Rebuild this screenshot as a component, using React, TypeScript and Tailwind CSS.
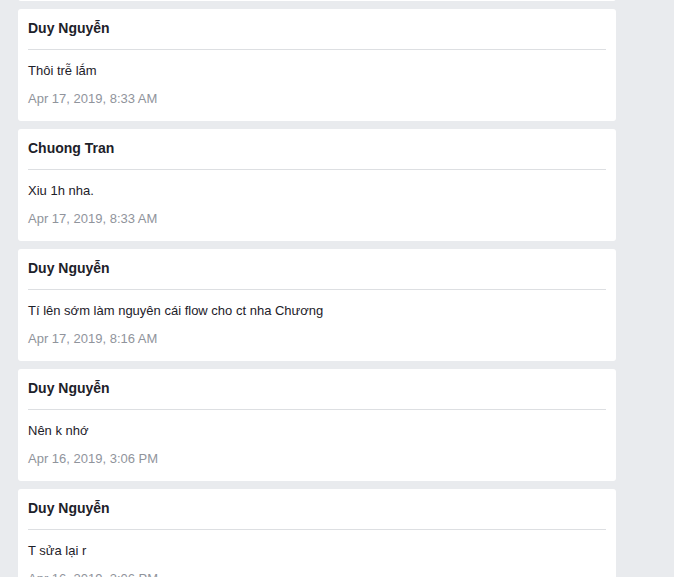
import React from "react";

type Message = {
  author: string;
  text: string;
  time: string;
};

const messages: Message[] = [
  { author: "Chuong Tran", text: "Ok", time: "Apr 17, 2019, 8:34 AM" },
  { author: "Duy Nguyễn", text: "Thôi trễ lắm", time: "Apr 17, 2019, 8:33 AM" },
  { author: "Chuong Tran", text: "Xiu 1h nha.", time: "Apr 17, 2019, 8:33 AM" },
  {
    author: "Duy Nguyễn",
    text: "Tí lên sớm làm nguyên cái flow cho ct nha Chương",
    time: "Apr 17, 2019, 8:16 AM",
  },
  { author: "Duy Nguyễn", text: "Nên k nhớ", time: "Apr 16, 2019, 3:06 PM" },
  { author: "Duy Nguyễn", text: "T sửa lại r", time: "Apr 16, 2019, 3:06 PM" },
];

function MessageCard({ message }: { message: Message }) {
  return (
    <div className="flex flex-col h-[112px] bg-white rounded-[3px] px-[10px]">
      {/* Author */}
      <div className="h-[41px] flex items-center border-b border-[#dddfe2]">
        <h3 className="text-[14px] font-bold text-[#1d2129] leading-[18px] pb-[3px]">
          {message.author}
        </h3>
      </div>

      {/* Body */}
      <p className="mt-[12px] text-[13px] leading-[18px] text-[#1d2129]">
        {message.text}
      </p>
      <p className="mt-[10px] text-[13px] leading-[18px] text-[#90949c]">
        {message.time}
      </p>
    </div>
  );
}

export default function App() {
  return (
    <div
      className="h-[577px] overflow-hidden bg-[#e9ebee]"
      style={{ fontFamily: '"Liberation Sans", Arial, sans-serif' }}
    >
      <div className="w-[598px] ml-[18px] -mt-[111px] flex flex-col gap-[8px]">
        {messages.map((m, i) => (
          <MessageCard key={i} message={m} />
        ))}
      </div>
    </div>
  );
}
